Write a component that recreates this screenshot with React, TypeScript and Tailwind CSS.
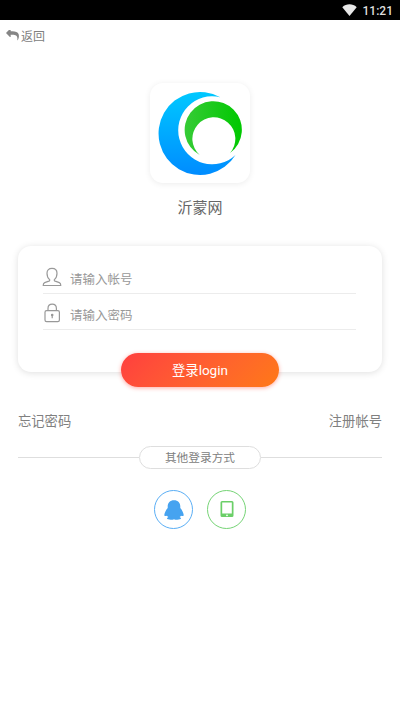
import React from 'react';

function StatusBar() {
  return (
    <div className="flex h-5 items-center justify-end bg-black pr-[7px]">
      <svg className="mr-[6px] h-[12px] w-[15px]" viewBox="0 0 15 12" fill="#e8e8e8">
        <path d="M0.3 3.2C4.3 -0.6 10.700 -0.6 14.700 3.2L7.5 12Z" />
      </svg>
      <span className="pt-px font-['Roboto',sans-serif] text-[12px] leading-5 font-medium text-[#dedede]">11:21</span>
    </div>
  );
}

function Logo() {
  return (
    <div className="h-[100px] w-[100px] rounded-[13px] bg-white shadow-[0_1px_6px_rgba(0,0,0,0.08)]">
      <svg viewBox="0 0 100 100" className="h-full w-full">
        <defs>
          <linearGradient id="blue" x1="0" y1="0" x2="0" y2="1">
            <stop offset="0" stopColor="#00c8ff" />
            <stop offset="1" stopColor="#008cff" />
          </linearGradient>
          <linearGradient id="green" x1="0" y1="0" x2="1" y2="0">
            <stop offset="0" stopColor="#36cb36" />
            <stop offset="1" stopColor="#00c800" />
          </linearGradient>
        </defs>
        <path fill="url(#blue)" d="M70.3 14.2A41.5 41.5 0 1 0 85.5 72A34 34 0 1 1 70.3 14.2Z" />
        <path fill="url(#green)" d="M49.7 72A28.6 28.6 0 1 1 80 70A21.5 21.5 0 1 0 49.7 72Z" />
      </svg>
    </div>
  );
}

function UserIcon() {
  return (
    <svg viewBox="0 0 20 20" className="h-5 w-5" fill="none" stroke="#999" strokeWidth="1.2" strokeLinejoin="round">
      <path d="M7.6 12.6C5.8 11.2 5 8.8 5 6.3C5 3.1 6.9 1.4 10 1.4S15 3.1 15 6.3C15 8.8 14.2 11.2 12.4 12.6C12 13.4 12.5 13.8 13.2 14.1L17.3 15.6C18.5 16.1 18.8 17 18.8 18.5H1.2C1.2 17 1.5 16.1 2.7 15.6L6.8 14.1C7.5 13.8 8 13.4 7.6 12.6Z" />
    </svg>
  );
}

function LockIcon() {
  return (
    <svg viewBox="0 0 20 20" className="h-5 w-5" fill="none" stroke="#999" strokeWidth="1.2">
      <rect x="3" y="7.6" width="14.4" height="11" rx="1.6" />
      <path d="M6 7.6V5.5C6 3 7.7 1.2 10.2 1.2S14.4 3 14.4 5.5V7.6" />
      <circle cx="10.2" cy="12" r="0.7" fill="#999" />
      <path d="M10.2 12V15.3" />
    </svg>
  );
}

function Field({ icon, label }: { icon: React.ReactNode; label: string }) {
  return (
    <div className="flex h-9 items-end border-b border-[#ececec] pb-[6px]">
      <span className="-ml-px">{icon}</span>
      <span className="ml-2 text-[12.5px] leading-[16px] text-[#999]">{label}</span>
    </div>
  );
}

export default function App() {
  return (
    <div className="h-[711px] w-[400px] overflow-hidden bg-white font-['Noto_Sans_CJK_SC',sans-serif] text-[#666]">
      <StatusBar />
      <div className="flex h-[30px] items-center pl-[6px]">
        <svg viewBox="0 0 1792 1536" className="h-[11px] w-[13px]" fill="#858585">
          <path d="M1792 896q0 166-127 451-3 7-10.500 24t-13.500 30-13 22q-12 17-28 17-15 0-23.500-10t-8.500-25q0-9 2.500-26.500t2.500-23.500q5-68 5-123 0-101-17.500-181t-48.500-138.500-80-101-105.500-69.500-133-42.500-154-21.500-175.500-6h-224v256q0 26-19 45t-45 19-45-19l-512-512q-19-19-19-45t19-45l512-512q19-19 45-19t45 19 19 45v256h224q713 0 875 403 53 134 53 333z" />
        </svg>
        <span className="ml-[2px] pt-px text-[12px] text-[#808080]">返回</span>
      </div>
      <div className="flex flex-col items-center pt-[33px]">
        <Logo />
        <h1 className="mt-[12px] text-[15px] leading-[23px]">沂蒙网</h1>
      </div>

      <div className="mx-[18px] mt-[28px] flex h-[126px] flex-col rounded-[13px] bg-white pt-[12px] shadow-[0_1px_7px_rgba(0,0,0,0.13)]">
        <div className="mr-[26px] ml-[25px]">
          <Field icon={<UserIcon />} label="请输入帐号" />
          <Field icon={<LockIcon />} label="请输入密码" />
        </div>
        <button className="mt-[23px] h-[34px] w-[158px] shrink-0 self-center rounded-full bg-linear-135 from-[#ff3e3e] to-[#ff7815] text-[13.3px] leading-[34px] text-white shadow-[0_1px_4px_rgba(255,65,50,0.45)]">
          <span>登录</span><span className="font-['Roboto',sans-serif] text-[13.5px]">login</span>
        </button>
      </div>

      <div className="mx-[18px] mt-[39px] flex justify-between text-[13.3px] leading-5 text-[#808080]">
        <span>忘记密码</span>
        <span>注册帐号</span>
      </div>

      <div className="mx-[18px] mt-[15px] flex items-center">
        <div className="h-px flex-1 bg-[#dedede]" />
        <div className="h-[23px] w-[122px] rounded-full border border-[#dedede] text-center text-[11.7px] leading-[20px] text-[#808080]">其他登录方式</div>
        <div className="h-px flex-1 bg-[#dedede]" />
      </div>

      <div className="mt-[21px] flex justify-center gap-[14px]">
        <div className="flex h-[39px] w-[39px] items-center justify-center rounded-full border border-[#5aaef5]">
          <svg viewBox="0 0 20 20" className="h-5 w-5" fill="#46a3f0">
            <path d="M10 0.3C6 0.3 3.7 3 3.7 6.600V8C2 9.800 0.500 13 0.300 15C0.300 16.200 1.300 16.100 3 15.700C3.300 16.300 3.700 16.700 4.400 17C3.300 17.500 3 18.100 3 18.600C3 20 8.700 20 10 19.200C11.300 20 17 20 17 18.600C17 18.100 16.700 17.500 15.600 17C16.300 16.700 16.700 16.300 17 15.700C18.700 16.100 19.700 16.200 19.700 15C19.500 13 18 9.800 16.300 8V6.600C16.300 3 14 0.300 10 0.300Z" />
          </svg>
        </div>
        <div className="flex h-[39px] w-[39px] items-center justify-center rounded-full border border-[#76d476]">
          <svg viewBox="0 0 14 16" className="mb-[2px] h-4 w-[14px]">
            <path fill="#6bcf68" fillRule="evenodd" d="M2 0H12Q13.500 0 13.500 1.500V14.500Q13.500 16 12 16H2Q0.500 16 0.500 14.500V1.500Q0.500 0 2 0ZM2.200 1.500V12.500H11.800V1.500Z" />
            <circle cx="7" cy="14.300" r="0.900" fill="white" />
          </svg>
        </div>
      </div>
    </div>
  );
}
